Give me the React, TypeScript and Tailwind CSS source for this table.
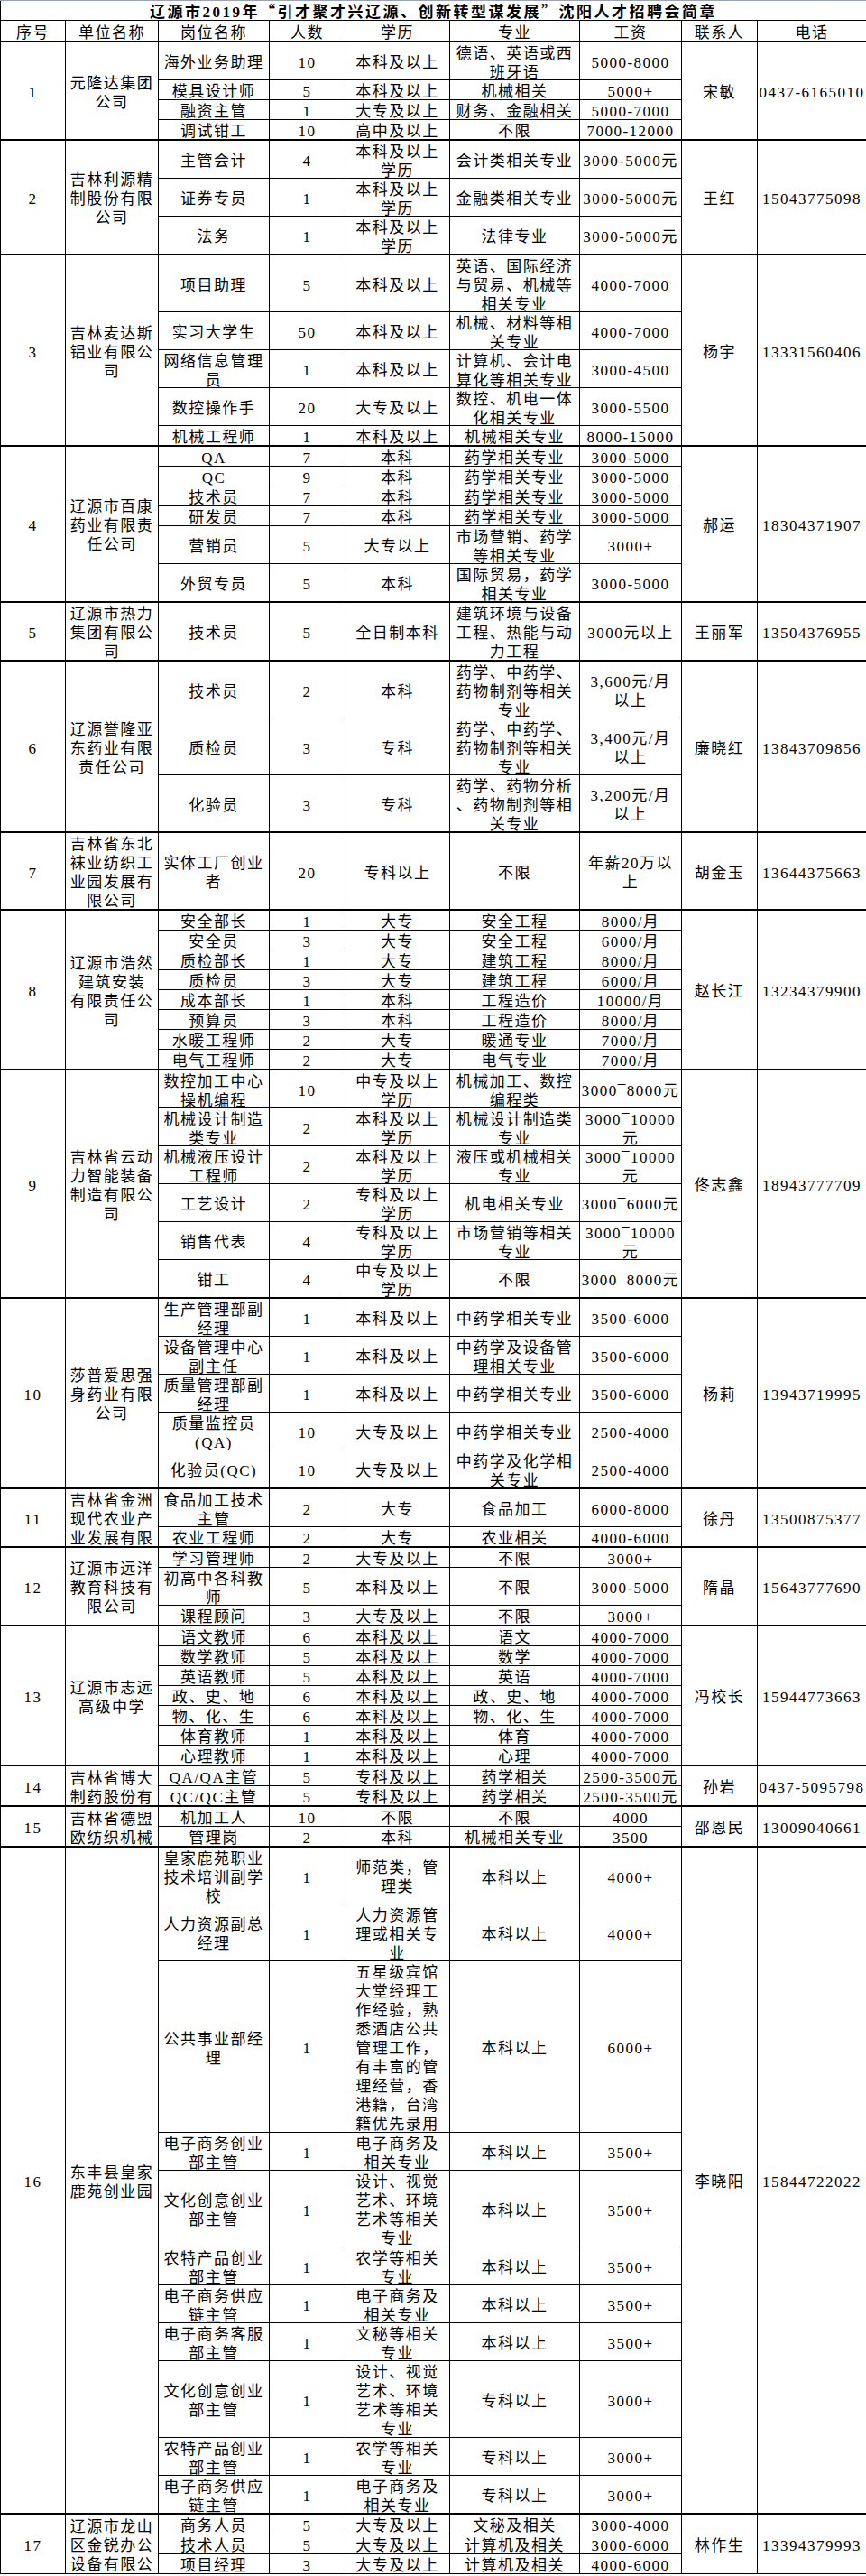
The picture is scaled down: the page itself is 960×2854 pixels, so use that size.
import type { ReactNode } from "react";

type Job = [string, string, string, string, string];

interface Company {
  no: string;
  name: string;
  contact: string;
  phone: string;
  jobs: Job[];
}

const companies: Company[] = [
  {
    no: "1",
    name: "元隆达集团\n公司",
    contact: "宋敏",
    phone: "0437-6165010",
    jobs: [
      ["海外业务助理", "10", "本科及以上", "德语、英语或西\n班牙语", "5000-8000"],
      ["模具设计师", "5", "本科及以上", "机械相关", "5000+"],
      ["融资主管", "1", "大专及以上", "财务、金融相关", "5000-7000"],
      ["调试钳工", "10", "高中及以上", "不限", "7000-12000"],
    ],
  },
  {
    no: "2",
    name: "吉林利源精\n制股份有限\n公司",
    contact: "王红",
    phone: "15043775098",
    jobs: [
      ["主管会计", "4", "本科及以上\n学历", "会计类相关专业", "3000-5000元"],
      ["证券专员", "1", "本科及以上\n学历", "金融类相关专业", "3000-5000元"],
      ["法务", "1", "本科及以上\n学历", "法律专业", "3000-5000元"],
    ],
  },
  {
    no: "3",
    name: "吉林麦达斯\n铝业有限公\n司",
    contact: "杨宇",
    phone: "13331560406",
    jobs: [
      ["项目助理", "5", "本科及以上", "英语、国际经济\n与贸易、机械等\n相关专业", "4000-7000"],
      ["实习大学生", "50", "本科及以上", "机械、材料等相\n关专业", "4000-7000"],
      ["网络信息管理\n员", "1", "本科及以上", "计算机、会计电\n算化等相关专业", "3000-4500"],
      ["数控操作手", "20", "大专及以上", "数控、机电一体\n化相关专业", "3000-5500"],
      ["机械工程师", "1", "本科及以上", "机械相关专业", "8000-15000"],
    ],
  },
  {
    no: "4",
    name: "辽源市百康\n药业有限责\n任公司",
    contact: "郝运",
    phone: "18304371907",
    jobs: [
      ["QA", "7", "本科", "药学相关专业", "3000-5000"],
      ["QC", "9", "本科", "药学相关专业", "3000-5000"],
      ["技术员", "7", "本科", "药学相关专业", "3000-5000"],
      ["研发员", "7", "本科", "药学相关专业", "3000-5000"],
      ["营销员", "5", "大专以上", "市场营销、药学\n等相关专业", "3000+"],
      ["外贸专员", "5", "本科", "国际贸易，药学\n相关专业", "3000-5000"],
    ],
  },
  {
    no: "5",
    name: "辽源市热力\n集团有限公\n司",
    contact: "王丽军",
    phone: "13504376955",
    jobs: [["技术员", "5", "全日制本科", "建筑环境与设备\n工程、热能与动\n力工程", "3000元以上"]],
  },
  {
    no: "6",
    name: "辽源誉隆亚\n东药业有限\n责任公司",
    contact: "廉晓红",
    phone: "13843709856",
    jobs: [
      ["技术员", "2", "本科", "药学、中药学、\n药物制剂等相关\n专业", "3,600元/月\n以上"],
      ["质检员", "3", "专科", "药学、中药学、\n药物制剂等相关\n专业", "3,400元/月\n以上"],
      ["化验员", "3", "专科", "药学、药物分析\n、药物制剂等相\n关专业", "3,200元/月\n以上"],
    ],
  },
  {
    no: "7",
    name: "吉林省东北\n袜业纺织工\n业园发展有\n限公司",
    contact: "胡金玉",
    phone: "13644375663",
    jobs: [["实体工厂创业\n者", "20", "专科以上", "不限", "年薪20万以\n上"]],
  },
  {
    no: "8",
    name: "辽源市浩然\n建筑安装\n有限责任公\n司",
    contact: "赵长江",
    phone: "13234379900",
    jobs: [
      ["安全部长", "1", "大专", "安全工程", "8000/月"],
      ["安全员", "3", "大专", "安全工程", "6000/月"],
      ["质检部长", "1", "大专", "建筑工程", "8000/月"],
      ["质检员", "3", "大专", "建筑工程", "6000/月"],
      ["成本部长", "1", "本科", "工程造价", "10000/月"],
      ["预算员", "3", "本科", "工程造价", "8000/月"],
      ["水暖工程师", "2", "大专", "暖通专业", "7000/月"],
      ["电气工程师", "2", "大专", "电气专业", "7000/月"],
    ],
  },
  {
    no: "9",
    name: "吉林省云动\n力智能装备\n制造有限公\n司",
    contact: "佟志鑫",
    phone: "18943777709",
    jobs: [
      ["数控加工中心\n操机编程", "10", "中专及以上\n学历", "机械加工、数控\n编程类", "3000¯8000元"],
      ["机械设计制造\n类专业", "2", "本科及以上\n学历", "机械设计制造类\n专业", "3000¯10000\n元"],
      ["机械液压设计\n工程师", "2", "本科及以上\n学历", "液压或机械相关\n专业", "3000¯10000\n元"],
      ["工艺设计", "2", "专科及以上\n学历", "机电相关专业", "3000¯6000元"],
      ["销售代表", "4", "专科及以上\n学历", "市场营销等相关\n专业", "3000¯10000\n元"],
      ["钳工", "4", "中专及以上\n学历", "不限", "3000¯8000元"],
    ],
  },
  {
    no: "10",
    name: "莎普爱思强\n身药业有限\n公司",
    contact: "杨莉",
    phone: "13943719995",
    jobs: [
      ["生产管理部副\n经理", "1", "本科及以上", "中药学相关专业", "3500-6000"],
      ["设备管理中心\n副主任", "1", "本科及以上", "中药学及设备管\n理相关专业", "3500-6000"],
      ["质量管理部副\n经理", "1", "本科及以上", "中药学相关专业", "3500-6000"],
      ["质量监控员\n(QA)", "10", "大专及以上", "中药学相关专业", "2500-4000"],
      ["化验员(QC)", "10", "大专及以上", "中药学及化学相\n关专业", "2500-4000"],
    ],
  },
  {
    no: "11",
    name: "吉林省金洲\n现代农业产\n业发展有限",
    contact: "徐丹",
    phone: "13500875377",
    jobs: [
      ["食品加工技术\n主管", "2", "大专", "食品加工", "6000-8000"],
      ["农业工程师", "2", "大专", "农业相关", "4000-6000"],
    ],
  },
  {
    no: "12",
    name: "辽源市远洋\n教育科技有\n限公司",
    contact: "隋晶",
    phone: "15643777690",
    jobs: [
      ["学习管理师", "2", "大专及以上", "不限", "3000+"],
      ["初高中各科教\n师", "5", "本科及以上", "不限", "3000-5000"],
      ["课程顾问", "3", "大专及以上", "不限", "3000+"],
    ],
  },
  {
    no: "13",
    name: "辽源市志远\n高级中学",
    contact: "冯校长",
    phone: "15944773663",
    jobs: [
      ["语文教师", "6", "本科及以上", "语文", "4000-7000"],
      ["数学教师", "5", "本科及以上", "数学", "4000-7000"],
      ["英语教师", "5", "本科及以上", "英语", "4000-7000"],
      ["政、史、地", "6", "本科及以上", "政、史、地", "4000-7000"],
      ["物、化、生", "6", "本科及以上", "物、化、生", "4000-7000"],
      ["体育教师", "1", "本科及以上", "体育", "4000-7000"],
      ["心理教师", "1", "本科及以上", "心理", "4000-7000"],
    ],
  },
  {
    no: "14",
    name: "吉林省博大\n制药股份有",
    contact: "孙岩",
    phone: "0437-5095798",
    jobs: [
      ["QA/QA主管", "5", "专科及以上", "药学相关", "2500-3500元"],
      ["QC/QC主管", "5", "专科及以上", "药学相关", "2500-3500元"],
    ],
  },
  {
    no: "15",
    name: "吉林省德盟\n欧纺织机械",
    contact: "邵恩民",
    phone: "13009040661",
    jobs: [
      ["机加工人", "10", "不限", "不限", "4000"],
      ["管理岗", "2", "本科", "机械相关专业", "3500"],
    ],
  },
  {
    no: "16",
    name: "东丰县皇家\n鹿苑创业园",
    contact: "李晓阳",
    phone: "15844722022",
    jobs: [
      ["皇家鹿苑职业\n技术培训副学\n校", "1", "师范类，管\n理类", "本科以上", "4000+"],
      ["人力资源副总\n经理", "1", "人力资源管\n理或相关专\n业", "本科以上", "4000+"],
      [
        "公共事业部经\n理",
        "1",
        "五星级宾馆\n大堂经理工\n作经验，熟\n悉酒店公共\n管理工作，\n有丰富的管\n理经营，香\n港籍，台湾\n籍优先录用",
        "本科以上",
        "6000+",
      ],
      ["电子商务创业\n部主管", "1", "电子商务及\n相关专业", "本科以上", "3500+"],
      ["文化创意创业\n部主管", "1", "设计、视觉\n艺术、环境\n艺术等相关\n专业", "本科以上", "3500+"],
      ["农特产品创业\n部主管", "1", "农学等相关\n专业", "本科以上", "3500+"],
      ["电子商务供应\n链主管", "1", "电子商务及\n相关专业", "本科以上", "3500+"],
      ["电子商务客服\n部主管", "1", "文秘等相关\n专业", "本科以上", "3500+"],
      ["文化创意创业\n部主管", "1", "设计、视觉\n艺术、环境\n艺术等相关\n专业", "专科以上", "3000+"],
      ["农特产品创业\n部主管", "1", "农学等相关\n专业", "专科以上", "3000+"],
      ["电子商务供应\n链主管", "1", "电子商务及\n相关专业", "专科以上", "3000+"],
    ],
  },
  {
    no: "17",
    name: "辽源市龙山\n区金锐办公\n设备有限公",
    contact: "林作生",
    phone: "13394379993",
    jobs: [
      ["商务人员", "5", "大专及以上", "文秘及相关", "3000-4000"],
      ["技术人员", "5", "大专及以上", "计算机及相关", "3000-6000"],
      ["项目经理", "3", "大专及以上", "计算机及相关", "4000-6000"],
    ],
  },
];

const headers = ["序号", "单位名称", "岗位名称", "人数", "学历", "专业", "工资", "联系人", "电话"];

// inner box height per number of text lines in a row
const rowHeight: Record<number, string> = {
  1: "h-[21px]",
  2: "h-[41px]",
  3: "h-[62px]",
  4: "h-[84px]",
  9: "h-[189px]",
};

const lineCount = (s: string) => s.split("\n").length;

function Cell({
  children,
  rowSpan,
  first,
  h,
}: {
  children: ReactNode;
  rowSpan?: number;
  first?: boolean;
  h?: string;
}) {
  return (
    <td
      rowSpan={rowSpan}
      className={
        "overflow-hidden border border-black p-0 text-center align-middle whitespace-pre leading-[21px]" +
        (first ? " border-t-2" : "")
      }
    >
      {h ? (
        <div className={"flex items-center justify-center overflow-hidden " + h}>
          <div className="translate-y-[2px]">{children}</div>
        </div>
      ) : (
        <div className="translate-y-[2px]">{children}</div>
      )}
    </td>
  );
}

function CompanyRows({ c }: { c: Company }) {
  const n = c.jobs.length;
  return (
    <>
      {c.jobs.map((job, i) => {
        let lines = Math.max(...job.map(lineCount));
        if (n === 1) lines = Math.max(lines, lineCount(c.name));
        const h = rowHeight[lines];
        return (
          <tr key={i}>
            {i === 0 && (
              <>
                <Cell rowSpan={n} first>
                  {c.no}
                </Cell>
                <Cell rowSpan={n} first>
                  {c.name}
                </Cell>
              </>
            )}
            {job.map((v, k) => (
              <Cell key={k} first={i === 0} h={h}>
                {v}
              </Cell>
            ))}
            {i === 0 && (
              <>
                <Cell rowSpan={n} first>
                  {c.contact}
                </Cell>
                <Cell rowSpan={n} first>
                  {c.phone}
                </Cell>
              </>
            )}
          </tr>
        );
      })}
    </>
  );
}

export default function App() {
  return (
    <div className="w-[960px] bg-white font-['Liberation_Serif','Noto_Sans_CJK_SC',serif] text-[17px] tracking-[1.5px] text-black">
      <table className="w-[960px] table-fixed border-collapse">
        <colgroup>
          <col className="w-[72px]" />
          <col className="w-[103px]" />
          <col className="w-[123px]" />
          <col className="w-[84px]" />
          <col className="w-[116px]" />
          <col className="w-[144px]" />
          <col className="w-[113px]" />
          <col className="w-[84px]" />
          <col className="w-[121px]" />
        </colgroup>
        <tbody>
          <tr>
            <td
              colSpan={9}
              className="overflow-hidden border border-black border-t-[#9ca3af] p-0 text-center align-middle text-[17px] leading-[21px] font-bold tracking-[2.5px]"
            >
              <div className="flex h-[21px] items-center justify-center">
                <div className="translate-y-[1px] whitespace-pre">
                  辽源市2019年<span className="font-['Noto_Sans_CJK_SC']">“</span>引才聚才兴辽源、创新转型谋发展
                  <span className="font-['Noto_Sans_CJK_SC']">”</span>沈阳人才招聘会简章
                </div>
              </div>
            </td>
          </tr>
          <tr>
            {headers.map((hd) => (
              <Cell key={hd} h="h-[22px]">
                {hd}
              </Cell>
            ))}
          </tr>
          {companies.map((c) => (
            <CompanyRows key={c.no} c={c} />
          ))}
        </tbody>
      </table>
    </div>
  );
}
